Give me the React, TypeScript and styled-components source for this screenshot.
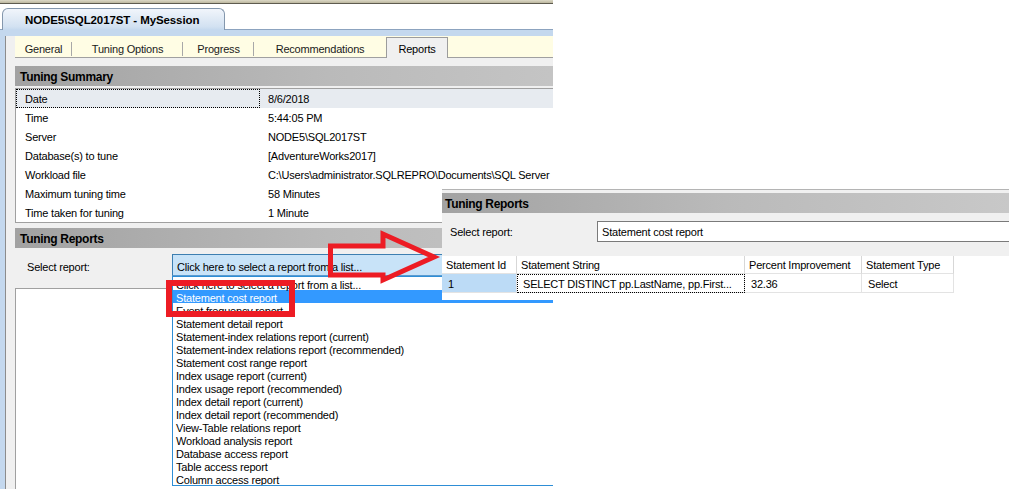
import React from 'react';
import styled, { createGlobalStyle } from 'styled-components';

const GlobalStyle = createGlobalStyle`
  * { box-sizing: border-box; }
  html, body { margin: 0; padding: 0; background: #ffffff; }
  body {
    font-family: "Liberation Sans", Arial, sans-serif;
    font-size: 11px;
    letter-spacing: -0.2px;
    color: #000000;
  }
`;

const summary = [
  { label: 'Date', value: '8/6/2018' },
  { label: 'Time', value: '5:44:05 PM' },
  { label: 'Server', value: 'NODE5\\SQL2017ST' },
  { label: 'Database(s) to tune', value: '[AdventureWorks2017]' },
  { label: 'Workload file', value: 'C:\\Users\\administrator.SQLREPRO\\Documents\\SQL Server' },
  { label: 'Maximum tuning time', value: '58 Minutes' },
  { label: 'Time taken for tuning', value: '1 Minute' },
];

const reports = [
  'Click here to select a report from a list...',
  'Statement cost report',
  'Event frequency report',
  'Statement detail report',
  'Statement-index relations report (current)',
  'Statement-index relations report (recommended)',
  'Statement cost range report',
  'Index usage report (current)',
  'Index usage report (recommended)',
  'Index detail report (current)',
  'Index detail report (recommended)',
  'View-Table relations report',
  'Workload analysis report',
  'Database access report',
  'Table access report',
  'Column access report',
];

const tabs = [
  { name: 'General', width: 57 },
  { name: 'Tuning Options', width: 111 },
  { name: 'Progress', width: 71 },
  { name: 'Recommendations', width: 132 },
];

const columns = [
  { title: 'Statement Id', width: 75 },
  { title: 'Statement String', width: 228 },
  { title: 'Percent Improvement', width: 117 },
  { title: 'Statement Type', width: 92 },
];

const App: React.FC = () => {
  return (
    <>
      <GlobalStyle />
      <Canvas>
        <Window>
          <Screen>
            <TitleStrip />
            <DocTabRow>
              <DocTab>NODE5\SQL2017ST - MySession</DocTab>
            </DocTabRow>
            <Frame>
              <Panel>
                <TabStrip>
                  {tabs.map((t, i) => (
                    <Tab key={t.name} $width={t.width} $divider={i < tabs.length - 1}>{t.name}</Tab>
                  ))}
                  <ActiveTab>Reports</ActiveTab>
                </TabStrip>
                <SectionHeader>Tuning Summary</SectionHeader>
                <SummaryBox>
                  {summary.map((row, i) => (
                    <SummaryRow key={row.label} $selected={i === 0}>
                      <SummaryLabel $focused={i === 0}>{row.label}</SummaryLabel>
                      <SummaryValue>{row.value}</SummaryValue>
                    </SummaryRow>
                  ))}
                </SummaryBox>
                <SectionHeader $gap={5}>Tuning Reports</SectionHeader>
                <SelectRow>
                  <SelectLabel>Select report:</SelectLabel>
                  <Combo>
                    Click here to select a report from a list...
                    <DropList>
                      {reports.map((r, i) => (
                        <DropItem key={r} $selected={i === 1}>{r}</DropItem>
                      ))}
                    </DropList>
                  </Combo>
                </SelectRow>
                <ReportArea />
              </Panel>
            </Frame>
          </Screen>
        </Window>

        <Inset>
          <InsetHeader>Tuning Reports</InsetHeader>
          <InsetSelectRow>
            <InsetLabel>Select report:</InsetLabel>
            <InsetCombo>Statement cost report</InsetCombo>
          </InsetSelectRow>
          <Grid>
            <GridRow>
              {columns.map((c) => (
                <HeadCell key={c.title} $width={c.width}>{c.title}</HeadCell>
              ))}
            </GridRow>
            <GridRow>
              <DataCell $width={75} $selected>1</DataCell>
              <DataCell $width={228} $focused>SELECT DISTINCT pp.LastName, pp.First...</DataCell>
              <DataCell $width={117}>32.36</DataCell>
              <DataCell $width={92}>Select</DataCell>
            </GridRow>
          </Grid>
        </Inset>

        <Marks width="1009" height="489" viewBox="0 0 1009 489">
          <polygon
            points="330.5,246 383,246 383,234 434,257 383,280 383,275 330.5,275"
            fill="none"
            stroke="#ed1c24"
            strokeWidth="5"
            strokeLinejoin="miter"
          />
          <rect x="169" y="283" width="123" height="31" fill="none" stroke="#ed1c24" strokeWidth="6" />
        </Marks>
      </Canvas>
    </>
  );
};

const Canvas = styled.div`
  position: relative;
  width: 1009px;
  height: 489px;
  overflow: hidden;
  background: #ffffff;
`;

const Window = styled.div`
  position: relative;
  z-index: 1;
  width: 553px;
  height: 489px;
  overflow: hidden;
`;

const Screen = styled.div`
  width: 640px;
  height: 489px;
  display: flex;
  flex-direction: column;
`;

const TitleStrip = styled.div`
  height: 4px;
  background: linear-gradient(#dcd8c6, #bcb79f);
  border-bottom: 1px solid #5e5b4f;
`;

const DocTabRow = styled.div`
  height: 25px;
  display: flex;
  align-items: flex-end;
  padding-left: 2px;
  background: #ffffff;
`;

const DocTab = styled.div`
  width: 223px;
  height: 22px;
  margin-bottom: -1px;
  position: relative;
  z-index: 1;
  display: flex;
  align-items: center;
  padding-left: 22px;
  border: 1px solid #8497ad;
  border-bottom: none;
  border-radius: 6px 6px 0 0;
  background: linear-gradient(#f1f5fb, #d2e1f1 85%, #c4d8ee);
  font-weight: bold;
  font-size: 11.5px;
  letter-spacing: -0.1px;
`;

const Frame = styled.div`
  flex: 1;
  min-height: 0;
  display: flex;
  flex-direction: column;
  background: #c4d8ee;
  border-top: 1px solid #8ca3bf;
  padding: 6px 0 0 5px;
`;

const Panel = styled.div`
  flex: 1;
  min-height: 0;
  display: flex;
  flex-direction: column;
  background: #f0f0f0;
  border-left: 1px solid #8c8c8c;
  padding-left: 9px;
`;

const TabStrip = styled.div`
  height: 22px;
  display: flex;
  align-items: flex-end;
  background: #fffde4;
  border-bottom: 1px solid #a0a0a0;
  margin-bottom: 8px;
`;

const Tab = styled.div<{ $width: number; $divider: boolean }>`
  position: relative;
  width: ${(p) => p.$width}px;
  height: 21px;
  display: flex;
  align-items: center;
  justify-content: center;
  padding-top: 4px;
  color: #1a1a1a;

  &::after {
    content: '';
    display: ${(p) => (p.$divider ? 'block' : 'none')};
    position: absolute;
    right: 0;
    top: 6px;
    height: 14px;
    border-right: 1px solid #a8a8a8;
  }
`;

const ActiveTab = styled.div`
  width: 62px;
  height: 21px;
  margin-bottom: -1px;
  display: flex;
  align-items: center;
  justify-content: center;
  padding-top: 1px;
  background: #f0f0f0;
  border: 1px solid #9c9c9c;
  border-bottom: none;
`;

const SectionHeader = styled.div<{ $gap?: number }>`
  height: 20px;
  margin-top: ${(p) => p.$gap ?? 0}px;
  display: flex;
  align-items: center;
  padding-left: 5px;
  padding-top: 1px;
  background: linear-gradient(to right, #a2a2a2, #bababa 50%, #c8c8c8);
  font-weight: bold;
  font-size: 12px;
  letter-spacing: -0.3px;
`;

const SummaryBox = styled.div`
  margin-top: 2px;
  border: 1px solid #a0a0a0;
  background: #ffffff;
`;

const SummaryRow = styled.div<{ $selected: boolean }>`
  height: 19px;
  display: grid;
  grid-template-columns: 244px 1fr;
  background: ${(p) => (p.$selected ? '#e7ebf0' : '#ffffff')};
`;

const SummaryLabel = styled.div<{ $focused: boolean }>`
  display: flex;
  align-items: center;
  padding-left: 8px;
  border: 1px dotted ${(p) => (p.$focused ? '#000000' : 'transparent')};
`;

const SummaryValue = styled.div`
  display: flex;
  align-items: center;
  padding-left: 8px;
  white-space: nowrap;
  overflow: hidden;
`;

const SelectRow = styled.div`
  height: 40px;
  display: flex;
  align-items: flex-start;
  padding: 6px 0 0 12px;
`;

const SelectLabel = styled.div`
  width: 145px;
  padding-top: 2px;
  line-height: 23px;
`;

const Combo = styled.div`
  position: relative;
  z-index: 2;
  flex: 1;
  height: 22px;
  display: flex;
  align-items: center;
  padding: 3px 0 0 4px;
  background: #c8e3f8;
  border: 1px solid #3d7fb1;
  border-bottom-color: #5a9bd0;
`;

const DropList = styled.div`
  position: absolute;
  left: -1px;
  right: -1px;
  top: 21px;
  height: 210px;
  border: 1px solid #2e8ed6;
  background: #ffffff;
  overflow: hidden;
`;

const DropItem = styled.div<{ $selected: boolean }>`
  height: 13px;
  line-height: 13px;
  padding: 2px 0 0 3px;
  white-space: nowrap;
  background: ${(p) => (p.$selected ? '#3399ff' : 'transparent')};
  color: ${(p) => (p.$selected ? '#ffffff' : '#000000')};
`;

const ReportArea = styled.div`
  flex: 1;
  background: #ffffff;
  border: 1px solid #a0a0a0;
  border-bottom: none;
`;

const Inset = styled.div`
  position: absolute;
  z-index: 3;
  left: 442px;
  top: 189px;
  width: 567px;
  height: 111px;
  display: flex;
  flex-direction: column;
  background: #f0f0f0;
  border-top: 1px solid #b4b4b4;
  padding-top: 3px;
`;

const InsetHeader = styled.div`
  height: 20px;
  display: flex;
  align-items: center;
  padding-left: 3px;
  padding-top: 1px;
  background: linear-gradient(to right, #a2a2a2, #bababa 50%, #c8c8c8);
  font-weight: bold;
  font-size: 12px;
  letter-spacing: -0.3px;
`;

const InsetSelectRow = styled.div`
  height: 43px;
  display: flex;
  align-items: flex-start;
  padding: 8px 0 0 8px;
`;

const InsetLabel = styled.div`
  width: 147px;
  line-height: 22px;
`;

const InsetCombo = styled.div`
  flex: 1;
  height: 21px;
  display: flex;
  align-items: center;
  padding: 1px 0 0 4px;
  background: #ffffff;
  border: 1px solid #7a7a7a;
  border-right: none;
`;

const Grid = styled.div`
  flex: 1;
  background: #ffffff;
`;

const GridRow = styled.div`
  display: flex;
`;

const HeadCell = styled.div<{ $width: number }>`
  width: ${(p) => p.$width}px;
  height: 18px;
  display: flex;
  align-items: center;
  padding: 1px 0 0 4px;
  background: #ffffff;
  border-right: 1px solid #d7d7d7;
  border-bottom: 1px solid #e3e3e3;
  white-space: nowrap;
`;

const DataCell = styled.div<{ $width: number; $selected?: boolean; $focused?: boolean }>`
  width: ${(p) => p.$width}px;
  height: 19px;
  display: flex;
  align-items: center;
  padding: 1px 0 0 6px;
  white-space: nowrap;
  background: ${(p) => (p.$selected ? '#bcdbf6' : '#ffffff')};
  border-bottom: 1px solid #e3e3e3;
  border-right: 1px solid #e3e3e3;
  outline: ${(p) => (p.$focused ? '1px dotted #000000' : 'none')};
  outline-offset: -1px;
`;

const Marks = styled.svg`
  position: absolute;
  left: 0;
  top: 0;
  pointer-events: none;
  z-index: 5;
`;

export default App;
